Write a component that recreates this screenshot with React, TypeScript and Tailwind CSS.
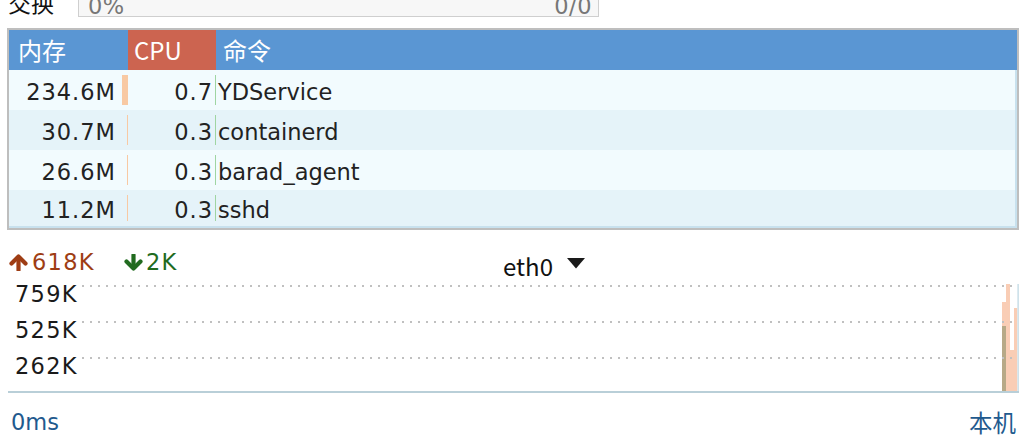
import React from 'react';

const rows = [
  { mem: '234.6M', bar: 6, cpu: '0.7', cmd: 'YDService' },
  { mem: '30.7M', bar: 1.5, cpu: '0.3', cmd: 'containerd' },
  { mem: '26.6M', bar: 1.5, cpu: '0.3', cmd: 'barad_agent' },
  { mem: '11.2M', bar: 1.5, cpu: '0.3', cmd: 'sshd' },
];

const rowBg = ['bg-[#f2fbfe]', 'bg-[#e5f3f9]', 'bg-[#f2fbfe]', 'bg-[#e5f3f9]'];
const rowH = ['h-[40px]', 'h-[40px]', 'h-[40px]', 'h-[36px]'];

function UpArrow() {
  return (
    <svg width="19" height="17" viewBox="0 0 19 17" className="shrink-0">
      <path d="M9.5 16 V4" stroke="#9e3d14" strokeWidth="4.2" strokeLinecap="round" fill="none" />
      <path d="M2.5 9.5 L9.5 2.5 L16.5 9.5" stroke="#9e3d14" strokeWidth="4.2" strokeLinecap="round" strokeLinejoin="round" fill="none" />
    </svg>
  );
}

function DownArrow() {
  return (
    <svg width="19" height="17" viewBox="0 0 19 17" className="shrink-0">
      <path d="M9.5 1 V13" stroke="#216b1f" strokeWidth="4.2" strokeLinecap="round" fill="none" />
      <path d="M2.5 7.5 L9.5 14.5 L16.5 7.5" stroke="#216b1f" strokeWidth="4.2" strokeLinecap="round" strokeLinejoin="round" fill="none" />
    </svg>
  );
}

export default function App() {
  return (
    <div className="w-[1034px] h-[440px] overflow-hidden bg-white font-['DejaVu_Sans','Noto_Sans_CJK_SC',sans-serif] text-[#222]">
      {/* swap row (cut at top) */}
      <div className="flex items-end h-[37px] -mt-[20px]">
        <div className="w-[78px] pl-[8px] mb-[3px] leading-[24px] text-[23px] font-['Noto_Sans_CJK_SC',sans-serif] text-[#111]">交换</div>
        <div className="w-[521px] h-[37px] border-[1.5px] border-[#cfcfcf] bg-[#f7f7f7] flex items-end justify-between pl-[9px] pr-[6px] text-[22.5px] leading-[20px] text-[#777] tracking-[0.5px]">
          <span>0%</span>
          <span>0/0</span>
        </div>
      </div>

      {/* process table */}
      <div className="mt-[11px] ml-[7px] w-[1012px] border-2 border-[#bebebe]">
        <div className="flex h-[40px] bg-[#5a96d3] text-white text-[24px] leading-[40px] font-['Noto_Sans_CJK_SC',sans-serif]">
          <div className="w-[119px] pl-[9px]">内存</div>
          <div className="w-[88px] pl-[6px] bg-[#cc6450]">CPU</div>
          <div className="pl-[7px]">命令</div>
        </div>
        <div className="border-r-2 border-b-2 border-[#c8e1ee] text-[22.5px]">
          {rows.map((r, i) => (
            <div key={i} className={`flex ${rowH[i]} ${rowBg[i]}`}>
              <div className="w-[119px] flex">
                <div className="flex-1 text-right self-center mt-[6px] tracking-[1px]">{r.mem}</div>
                <div className="w-[12px] flex justify-end py-[5px]">
                  <div className="bg-[#f8c9a3]" style={{ width: r.bar }} />
                </div>
              </div>
              <div className="w-[88px] flex">
                <div className="flex-1 text-right self-center mt-[6px] tracking-[1px]">{r.cpu}</div>
                <div className="w-[3px] flex justify-end py-[5px]">
                  <div className="w-[1.5px] bg-[#9fd5a2]" />
                </div>
              </div>
              <div className="pl-[2px] self-center mt-[6px]">{r.cmd}</div>
            </div>
          ))}
        </div>
      </div>

      {/* network header */}
      <div className="mt-[19px] h-[27px] flex items-start">
        <div className="w-[503px] flex items-center h-[27px] pl-[9px] text-[22.5px] leading-[27px] tracking-[1.3px]">
          <UpArrow />
          <span className="ml-[4px] text-[#9e3d14]">618K</span>
          <span className="ml-[29px]"><DownArrow /></span>
          <span className="ml-[3px] text-[#216b1f]">2K</span>
        </div>
        <div className="flex items-start">
          <span className="pt-[3px] text-[24px] leading-[27px] font-['Noto_Sans_CJK_SC',sans-serif] text-[#111]">eth0</span>
          <svg width="18" height="11" viewBox="0 0 18 11" className="ml-[14px] mt-[9px]">
            <polygon points="0,0 18,0 9,10.5" fill="#1a1a1a" />
          </svg>
        </div>
      </div>

      {/* chart */}
      <div className="ml-[8px] w-[1011px] h-[117px] flex border-b-2 border-[#b9cfd8]">
        <div className="w-[74px] pl-[7px] flex flex-col text-[22.5px] leading-[36px] tracking-[1.3px] text-[#1a1a1a]">
          <div>759K</div>
          <div>525K</div>
          <div>262K</div>
        </div>
        <svg width="937" height="115" viewBox="0 0 937 115" className="block">
          <rect x="920" y="26" width="4" height="89" fill="#f9cdb5" />
          <rect x="924" y="8" width="4" height="107" fill="#f9cdb5" />
          <rect x="928" y="74" width="4" height="41" fill="#f9cdb5" />
          <rect x="932" y="32" width="3.3" height="83" fill="#f9cdb5" />
          <rect x="920" y="50" width="4" height="65" fill="#b7a987" />
          <line x1="0" y1="10" x2="935" y2="10" stroke="#c0c0c0" strokeWidth="2" strokeDasharray="2 6" />
          <line x1="0" y1="46" x2="935" y2="46" stroke="#c0c0c0" strokeWidth="2" strokeDasharray="2 6" />
          <line x1="0" y1="82" x2="935" y2="82" stroke="#c0c0c0" strokeWidth="2" strokeDasharray="2 6" />
          <rect x="935.3" y="8" width="1.7" height="107" fill="#cfe2ea" />
        </svg>
      </div>

      {/* footer */}
      <div className="ml-[8px] w-[1011px] mt-[11px] flex items-start justify-between pl-[3px] pr-[3px] text-[#1f5a8e]">
        <span className="text-[22.5px] leading-[36px]">0ms</span>
        <span className="text-[23.5px] leading-[36px] font-['Noto_Sans_CJK_SC',sans-serif]">本机</span>
      </div>
    </div>
  );
}
